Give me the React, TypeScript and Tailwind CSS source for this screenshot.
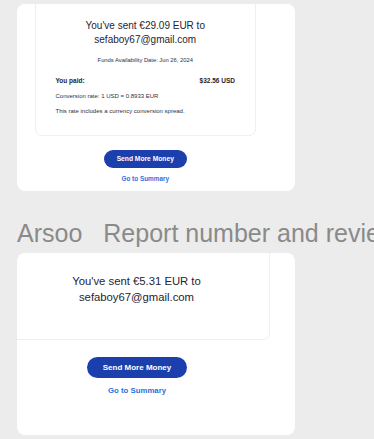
import React from 'react';

const cardFont = { fontFamily: '"Liberation Sans", Arial, sans-serif' };

const ReceiptCardLarge: React.FC = () => (
  <div className="ml-[17px] mt-[4px] w-[278px] overflow-hidden rounded-[8px] bg-white pb-[8px]" style={cardFont}>
    <div className="ml-[17.5px] w-[221.5px] rounded-b-[7px] border-x border-b border-[#efefef] px-[20px] pb-[20px] pt-[15px] text-[#1e2433]">
      <p className="text-center text-[10px] leading-[13.5px]">
        You've sent €29.09 EUR to
        <br />
        sefaboy67@gmail.com
      </p>
      <p className="mt-[10px] text-center text-[5.8px] leading-[8px] text-[#2c3140]">Funds Availability Date: Jun 26, 2024</p>
      <div className="mt-[13px] flex justify-between text-[6.5px] font-bold leading-[8px]">
        <span>You paid:</span>
        <span>$32.56 USD</span>
      </div>
      <p className="mt-[7px] text-[6px] leading-[8px] text-[#2c3140]">Conversion rate: 1 USD = 0.8933 EUR</p>
      <p className="mt-[7px] text-[6px] leading-[8px] text-[#2c3140]">This rate includes a currency conversion spread.</p>
    </div>
    <div className="ml-[17.5px] flex w-[221.5px] flex-col items-center">
      <button className="mt-[14px] flex h-[18px] w-[83px] items-center justify-center rounded-full bg-[#1c3fae] text-[6.7px] font-bold text-white">
        Send More Money
      </button>
      <a className="mt-[7px] text-[6.4px] font-bold leading-[8px] text-[#2f6fdc]">Go to Summary</a>
    </div>
  </div>
);

const ReceiptCardSmall: React.FC = () => (
  <div className="ml-[17px] mt-[6px] w-[278px] overflow-hidden rounded-[8px] bg-white pb-[39px]" style={cardFont}>
    <div className="-ml-[13px] w-[266px] rounded-br-[7px] border-r border-b border-[#efefef] pb-[34px] pt-[20px] text-[#1e2433]">
      <p className="text-center text-[11.3px] leading-[16px]">
        You've sent €5.31 EUR to
        <br />
        sefaboy67@gmail.com
      </p>
    </div>
    <div className="-ml-[13px] flex w-[266px] flex-col items-center">
      <button className="mt-[17px] flex h-[21px] w-[100px] items-center justify-center rounded-full bg-[#1c3fae] text-[8px] font-bold text-white">
        Send More Money
      </button>
      <a className="mt-[8px] text-[7.8px] font-bold leading-[10px] text-[#2f6fdc]">Go to Summary</a>
    </div>
  </div>
);

export default function App() {
  return (
    <div className="h-[439px] w-[374px] overflow-hidden bg-[#ececec]">
      <ReceiptCardLarge />
      <div
        className="mt-[28px] flex whitespace-nowrap pl-[17px] text-[25px] leading-[28px] text-[#8a8a8a]"
        style={{ fontFamily: '"Liberation Sans", Arial, sans-serif' }}
      >
        <span>Arsoo</span>
        <span className="ml-[21px]">Report number and review</span>
      </div>
      <ReceiptCardSmall />
    </div>
  );
}
